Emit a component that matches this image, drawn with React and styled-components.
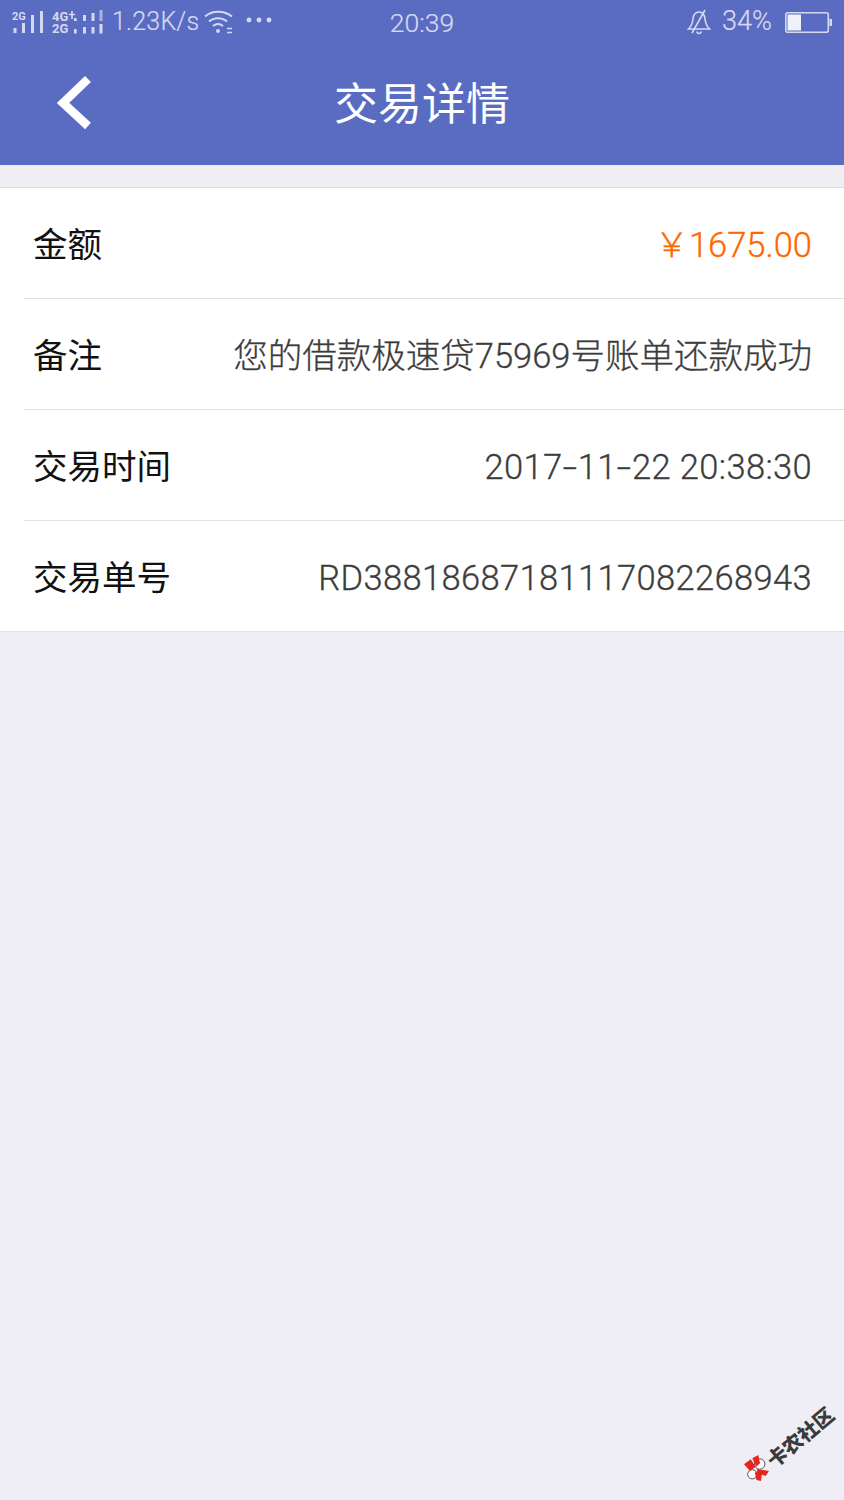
import React from "react";
import styled, { createGlobalStyle } from "styled-components";

const Global = createGlobalStyle`
  html, body { margin: 0; padding: 0; background: #efeef5; }
  body { font-family: Roboto, "Noto Sans CJK SC", sans-serif; }
`;

const Page = styled.div`
  width: 844px;
  height: 1500px;
  background: #efeef5;
  position: relative;
  overflow: hidden;
`;

const Header = styled.header`
  height: 165px;
  background: #5a6cc2;
  display: flex;
  flex-direction: column;
`;

const StatusBar = styled.div`
  height: 44px;
  display: grid;
  grid-template-columns: 1fr auto 1fr;
  align-items: center;
  padding: 0 12px;
  color: #d5d9f0;
  font-size: 26px;
  font-weight: 300;
  font-family: Roboto, sans-serif;
  -webkit-text-stroke: 0.2px #d5d9f0;
`;

const StatusLeft = styled.div`
  display: flex;
  align-items: center;
  gap: 8px;
`;

const StatusRight = styled.div`
  display: flex;
  align-items: center;
  justify-content: flex-end;
`;

const Speed = styled.span`
  margin-right: -3px;
  font-size: 25px;
  letter-spacing: 0.2px;
  position: relative;
  top: -1px;
`;

const Percent = styled.span`
  margin: 0 13px 0 11px;
  font-size: 27px;
  position: relative;
  top: -1px;
`;

const Time = styled.span`
  font-size: 26.5px;
`;

const DotsWrap = styled.span`
  display: flex;
  margin-left: 5px;
  position: relative;
  top: -2px;
`;

const NavBar = styled.div`
  flex: 1;
  display: flex;
  align-items: center;
  justify-content: center;
  position: relative;
  padding-bottom: 7px;
`;

const BackIcon = styled.svg`
  position: absolute;
  left: 55px;
  top: 30px;
`;

const Title = styled.h1`
  margin: 0;
  color: #fff;
  font-size: 44px;
  font-weight: 400;
  line-height: 1;
  font-family: "Noto Sans CJK SC", sans-serif;
`;

const List = styled.section`
  margin-top: 22px;
  background: #fff;
  border-top: 1px solid #dfdfdf;
  border-bottom: 1px solid #dfdfdf;
`;

const Row = styled.div`
  height: 110px;
  margin-left: 24px;
  padding: 0 33px 0 9px;
  display: flex;
  align-items: center;
  justify-content: space-between;
  border-bottom: ${(p) => (p.$last ? "none" : "1px solid #dfdfdf")};
`;

const Label = styled.span`
  font-family: "Noto Sans CJK SC", sans-serif;
  font-size: 34.5px;
  line-height: 40px;
  padding-bottom: 2px;
  color: #111;
`;

const Value = styled.span`
  font-family: Roboto, "Noto Sans CJK SC", sans-serif;
  font-size: 34.5px;
  font-weight: 300;
  line-height: 40px;
  padding-top: 4px;
  margin-right: -1px;
  -webkit-text-stroke: 0.3px ${(p) => p.$color || "#3c3c3c"};
  letter-spacing: ${(p) => (p.$wide ? "0.36px" : "0")};
  color: ${(p) => p.$color || "#3c3c3c"};
`;

const Dash = styled.span`
  display: inline-block;
  margin: 0 2.5px;
  transform: scaleX(1.5);
`;

const Watermark = styled.div`
  position: absolute;
  left: 744px;
  top: 1405px;
  width: 92px;
  height: 77px;
`;

const WatermarkText = styled.span`
  font-family: "Noto Sans CJK SC", sans-serif;
  font-weight: 900;
  font-size: 20px;
  line-height: 1;
  color: #3a3a3a;
  white-space: nowrap;
  position: absolute;
  left: 56px;
  top: 32px;
  transform: translate(-50%, -50%) rotate(-40deg);
`;

const WatermarkLogo = styled.svg`
  position: absolute;
  left: 0;
  top: 50px;
`;

const INK = "#d5d9f0";

const SignalOne = () => (
  <svg width="32" height="24" viewBox="0 0 32 24">
    <text x="0" y="10" fontSize="11" fontWeight="700" fontFamily="Roboto, sans-serif" fill={INK} stroke="none">2G</text>
    <rect x="1.5" y="18" width="3" height="5" fill={INK} />
    <rect x="10" y="13" width="3" height="10" fill={INK} />
    <rect x="19" y="5" width="3" height="18" fill={INK} />
    <rect x="28" y="1" width="3" height="22" fill={INK} />
  </svg>
);

const SignalTwo = () => (
  <svg width="52" height="26" viewBox="0 0 52 26">
    <text x="0" y="12" fontSize="13" fontWeight="700" fontFamily="Roboto, sans-serif" fill={INK} stroke="none">4G</text>
    <path d="M20 2v8M17 5.5h6" stroke={INK} strokeWidth="1.6" />
    <text x="0" y="24" fontSize="13" fontWeight="700" fontFamily="Roboto, sans-serif" fill={INK} stroke="none">2G</text>
    <rect x="22" y="9" width="2.6" height="3" fill={INK} />
    <rect x="22" y="20" width="2.6" height="4.5" fill={INK} />
    <rect x="31" y="6" width="3" height="6" fill={INK} />
    <rect x="31" y="18" width="3" height="6.5" fill={INK} />
    <rect x="39.5" y="4" width="3" height="8" fill={INK} />
    <rect x="39.5" y="18" width="3" height="6.5" fill={INK} />
    <rect x="47.5" y="1" width="3" height="11" fill="#aab2e0" />
    <rect x="47.5" y="15" width="3" height="9.5" fill={INK} />
  </svg>
);

const Wifi = () => (
  <svg width="29" height="24" viewBox="0 0 29 24" fill="none" stroke={INK} strokeWidth="2">
    <path d="M1 6.5 C8 0 20 0 28 6.5" />
    <path d="M5 11.5 C10 7 18 7 23 11.5" />
    <path d="M9 16 C12 13.5 16 13.5 19 16" />
    <circle cx="14" cy="21" r="2" fill={INK} stroke="none" />
    <path d="M23 18.5h5M23 22.5h5" strokeWidth="1.5" />
  </svg>
);

const Dots = () => (
  <svg width="26" height="6" viewBox="0 0 26 6" fill={INK}>
    <circle cx="3" cy="3" r="2.4" />
    <circle cx="13" cy="3" r="2.4" />
    <circle cx="23" cy="3" r="2.4" />
  </svg>
);

const BellOff = () => (
  <svg width="24" height="26" viewBox="0 0 24 26" fill="none" stroke={INK} strokeWidth="1.6">
    <path d="M1.5 20 C4.5 17 5.5 14 6 10 C6.5 5 9 3 12 3 C15 3 17.5 5 18 10 C18.5 14 19.5 17 22.5 20 Z" />
    <path d="M10 22.5 a2 2 0 0 0 4 0" />
    <path d="M18 1 L5 24" />
  </svg>
);

const Battery = () => (
  <svg width="47" height="21" viewBox="0 0 47 21">
    <rect x="0.8" y="0.8" width="42.5" height="19.4" rx="2" fill="none" stroke={INK} strokeWidth="1.6" />
    <rect x="2.5" y="2.5" width="13.5" height="16" fill="#f0f1fb" />
    <rect x="44.5" y="7" width="2.5" height="7" fill={INK} />
  </svg>
);

const rows = [
  { label: "金额", value: "￥1675.00", color: "#ff6600" },
  { label: "备注", value: "您的借款极速贷75969号账单还款成功" },
  {
    label: "交易时间",
    wide: true,
    value: (
      <>
        2017<Dash>-</Dash>11<Dash>-</Dash>22 20:38:30
      </>
    ),
  },
  { label: "交易单号", value: "RD38818687181117082268943", wide: true },
];

export default function App() {
  return (
    <Page>
      <Global />
      <Header>
        <StatusBar>
          <StatusLeft>
            <SignalOne />
            <SignalTwo />
            <Speed>1.23K/s</Speed>
            <Wifi />
            <DotsWrap>
              <Dots />
            </DotsWrap>
          </StatusLeft>
          <Time>20:39</Time>
          <StatusRight>
            <BellOff />
            <Percent>34%</Percent>
            <Battery />
          </StatusRight>
        </StatusBar>
        <NavBar>
          <BackIcon width="38" height="56" viewBox="0 0 38 56" fill="none" stroke="#fff" strokeWidth="8.5">
            <path d="M33 5 L8 29 L33 52" />
          </BackIcon>
          <Title>交易详情</Title>
        </NavBar>
      </Header>
      <List>
        {rows.map((r, i) => (
          <Row key={r.label} $last={i === rows.length - 1}>
            <Label>{r.label}</Label>
            <Value $color={r.color} $wide={r.wide}>{r.value}</Value>
          </Row>
        ))}
      </List>
      <Watermark>
        <WatermarkLogo width="27" height="27" viewBox="0 0 27 27">
          <circle cx="15.7" cy="9" r="5.2" fill="#fff" stroke="#555" strokeWidth="1" />
          <circle cx="8.3" cy="19.3" r="4.6" fill="#fff" stroke="#555" strokeWidth="1" />
          <path d="M0 9.3 L6.7 4.3 L11.7 11.7 L6 16 Z" fill="#e3261f" />
          <path d="M8.3 3.3 L14.3 0 L16 8.3 L12.3 11.7 Z" fill="#e3261f" />
          <path d="M13.3 14 L25 16 L21.7 21 L12.7 17.7 Z" fill="#e3261f" />
          <path d="M10.7 17.3 L18 18 L17 26 L12.5 25 Z" fill="#e3261f" />
        </WatermarkLogo>
        <WatermarkText>卡农社区</WatermarkText>
      </Watermark>
    </Page>
  );
}
